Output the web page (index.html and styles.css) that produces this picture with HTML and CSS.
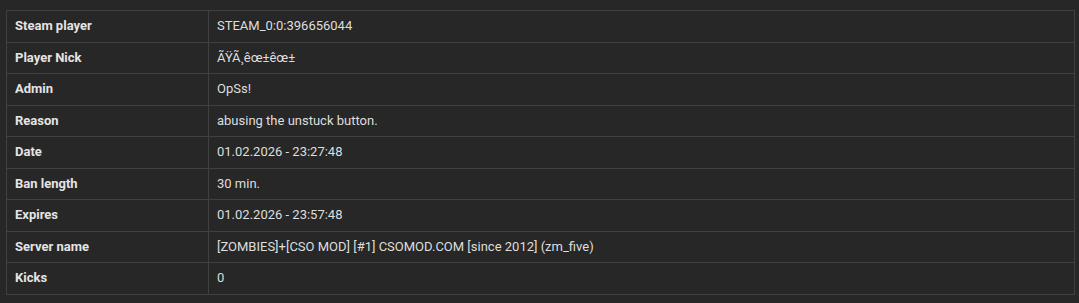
FILE: index.html
```html
<!DOCTYPE html>
<html>
<head>
<meta charset="utf-8">
<link rel="stylesheet" href="styles.css">
</head>
<body>
<div class="wrap">
<table class="info">
<tbody>
<tr><th>Steam player</th><td>STEAM_0:0:396656044</td></tr>
<tr><th>Player Nick</th><td>ÃŸÃ¸êœ±êœ±</td></tr>
<tr><th>Admin</th><td>OpSs!</td></tr>
<tr><th>Reason</th><td>abusing the unstuck button.</td></tr>
<tr><th>Date</th><td>01.02.2026 - 23:27:48</td></tr>
<tr><th>Ban length</th><td>30 min.</td></tr>
<tr><th>Expires</th><td>01.02.2026 - 23:57:48</td></tr>
<tr><th>Server name</th><td>[ZOMBIES]+[CSO MOD] [#1] CSOMOD.COM [since 2012] (zm_five)</td></tr>
<tr><th>Kicks</th><td>0</td></tr>
</tbody>
</table>
</div>
</body>
</html>
```
FILE: styles.css
```css
html, body {
  margin: 0;
  padding: 0;
  background: #272727;
}
.wrap {
  padding: 10px 4px 10px 6px;
}
.info {
  width: 1069px;
  border-collapse: collapse;
  font-family: Roboto, "Liberation Sans", sans-serif;
  font-size: 13px;
  line-height: 14.5px;
  color: #dedede;
}
.info th, .info td {
  border: 1px solid #404040;
  padding: 8px;
  text-align: left;
  vertical-align: middle;
}
.info th {
  width: 185px;
  font-weight: bold;
  color: #e4e4e4;
}
.info td {
  font-weight: normal;
}
```
